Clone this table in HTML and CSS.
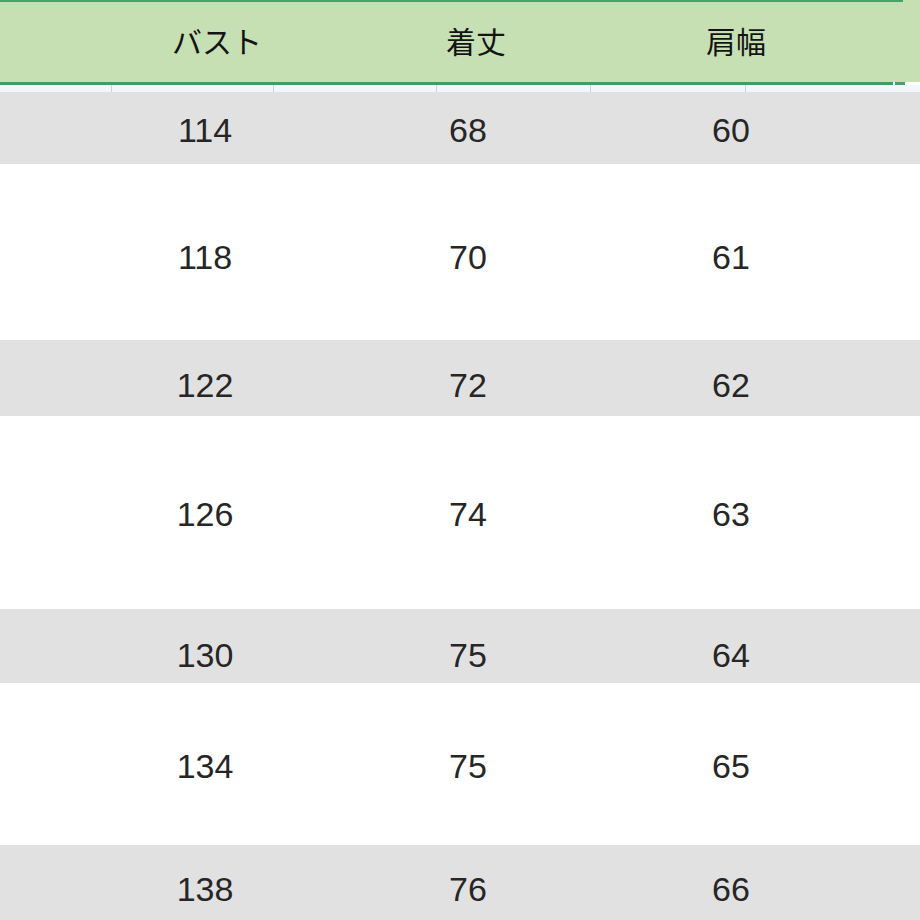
FILE: index.html
```html
<!DOCTYPE html>
<html lang="ja">
<head>
<meta charset="utf-8">
<title>サイズ表</title>
<link rel="stylesheet" href="styles.css">
</head>
<body>
<div class="sheet">
  <div class="top-band"><span class="top-rule"></span></div>
  <div class="head">
    <div class="hcell hc1">バスト</div>
    <div class="hcell hc2">着丈</div>
    <div class="hcell hc3">肩幅</div>
  </div>
  <div class="head-rule"><span class="handle"></span></div>
  <div class="gridstrip">
    <span class="gl g1"></span><span class="gl g2"></span><span class="gl g3"></span><span class="gl g4"></span><span class="gl g5"></span>
  </div>
  <div class="row gray r1"><span class="c c1">114</span><span class="c c2">68</span><span class="c c3">60</span></div>
  <div class="row r2"><span class="c c1">118</span><span class="c c2">70</span><span class="c c3">61</span></div>
  <div class="row gray r3"><span class="c c1">122</span><span class="c c2">72</span><span class="c c3">62</span></div>
  <div class="row r4"><span class="c c1">126</span><span class="c c2">74</span><span class="c c3">63</span></div>
  <div class="row gray r5"><span class="c c1">130</span><span class="c c2">75</span><span class="c c3">64</span></div>
  <div class="row r6"><span class="c c1">134</span><span class="c c2">75</span><span class="c c3">65</span></div>
  <div class="row gray r7"><span class="c c1">138</span><span class="c c2">76</span><span class="c c3">66</span></div>
</div>
</body>
</html>
```

FILE: styles.css
```css
html, body {
  margin: 0;
  padding: 0;
  background: #ffffff;
  overflow: hidden;
}

.sheet {
  width: 920px;
  height: 920px;
  overflow: hidden;
  font-family: "Liberation Sans", Arial, sans-serif;
}

.top-band {
  height: 2px;
  background: #c6e0b4;
}

.top-rule {
  display: block;
  width: 903px;
  height: 2px;
  background: #45a469;
}

.head {
  height: 80px;
  background: #c6e0b4;
  display: grid;
  grid-template-columns: 92px 250px 268px 252px 1fr;
  align-items: center;
  font-family: "Noto Sans CJK JP", "Noto Sans", sans-serif;
  font-size: 30px;
  font-weight: 400;
  color: #141414;
}

.hcell {
  text-align: center;
  padding-bottom: 4px;
}
.hc1 { grid-column: 2; }
.hc2 { grid-column: 3; }
.hc3 { grid-column: 4; }

.head-rule {
  position: relative;
  height: 3px;
  width: 893px;
  background: #3f9d63;
}

.handle {
  position: absolute;
  left: 895px;
  top: 0;
  width: 10px;
  height: 7px;
  background: #4a9f72;
}

.gridstrip {
  position: relative;
  height: 7px;
  background: #f3f7fb;
}

.gl {
  position: absolute;
  top: 0;
  width: 1px;
  height: 7px;
  background: #c9d3de;
}
.g1 { left: 111px; }
.g2 { left: 273px; }
.g3 { left: 436px; }
.g4 { left: 590px; }
.g5 { left: 745px; }

.row {
  display: grid;
  grid-template-columns: 80px 250px 276px 250px 1fr;
  align-items: center;
  background: #ffffff;
  font-size: 34px;
  color: #262626;
  box-sizing: border-box;
}
.row.gray { background: #e1e1e1; }

.c { text-align: center; }
.c1 { grid-column: 2; }
.c2 { grid-column: 3; }
.c3 { grid-column: 4; }

.r1 { height: 72px; padding-top: 4px; }
.r2 { height: 176px; padding-top: 10px; }
.r3 { height: 76px; padding-top: 14px; }
.r4 { height: 193px; padding-top: 4px; }
.r5 { height: 74px; padding-top: 18px; }
.r6 { height: 162px; padding-top: 4px; }
.r7 { height: 88px; padding-top: 0; }
```
